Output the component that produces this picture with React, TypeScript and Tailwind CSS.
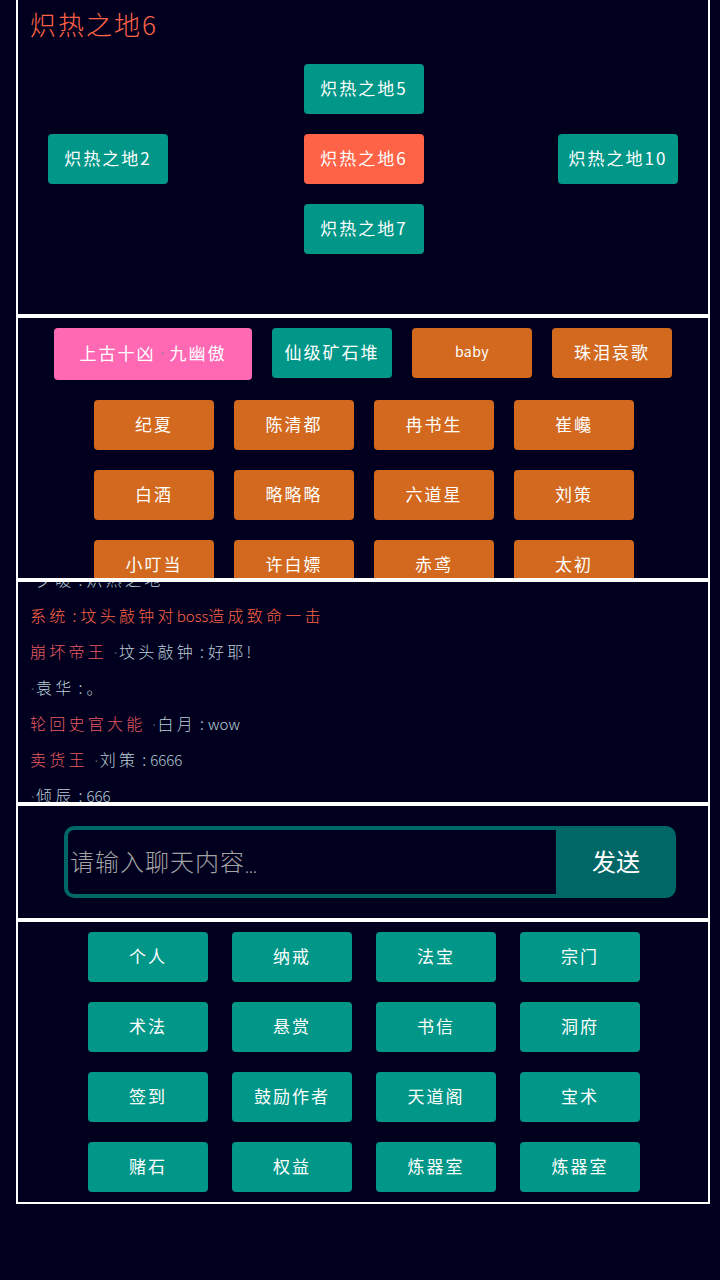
const FONT = "font-['Noto_Sans_CJK_SC','Noto_Sans',sans-serif]";

function Sep({ className = "" }: { className?: string }) {
  return <span className={`font-['Liberation_Sans'] tracking-[0px] text-[#6f8596] opacity-60 inline-block w-[6px] text-left ${className}`}>·</span>;
}

function Colon() {
  return <span className="inline-block w-[12px] text-center tracking-[0px]">:</span>;
}

function Btn({ label, color = "bg-[#009688]", w = "w-[120px]", h = "h-[50px]" }: { label: React.ReactNode; color?: string; w?: string; h?: string }) {
  return (
    <div className={`${w} ${h} ${color} shrink-0 rounded-[4px] flex items-center justify-center pb-[3px] text-[17px] tracking-[2px] text-white whitespace-nowrap`}>
      {label}
    </div>
  );
}

const players = [["纪夏", "陈清都", "冉书生", "崔巉"], ["白酒", "略略略", "六道星", "刘策"], ["小叮当", "许白嫖", "赤鸢", "太初"]];
const menu = [["个人", "纳戒", "法宝", "宗门"], ["术法", "悬赏", "书信", "洞府"], ["签到", "鼓励作者", "天道阁", "宝术"], ["赌石", "权益", "炼器室", "炼器室"]];
const ORANGE = "bg-[#d2691e]";
const LINE = "h-9 leading-[34px] whitespace-nowrap tracking-[3.25px] text-[16px] font-light";

function Latin({ children }: { children: React.ReactNode }) {
  return <span className="tracking-[0px] text-[15px]">{children}</span>;
}

function Line({ title, name, text }: { title?: string; name: string; text: React.ReactNode }) {
  return (
    <div className={LINE}>
      {title && <span className="text-[#e85a62] mr-[6px]">{title}</span>}
      <Sep />
      <span className="text-[#b9cdd6]">
        {name}
        <Colon />
        {text}
      </span>
    </div>
  );
}

export default function App() {
  return (
    <div className={`${FONT} min-h-[1280px] bg-[#00001e] pl-4 pr-[10px]`}>
      <section className="h-[316px] border-2 border-t-0 border-white overflow-hidden">
        <div className="pl-3 pt-[7px] h-[46px] text-[26px] leading-[34px] tracking-[2px] font-light text-[#ff6347]">炽热之地6</div>
        <div className="mt-[18px] pl-[30px] flex items-center">
          <Btn label="炽热之地2" />
          <div className="ml-[136px] flex flex-col gap-5">
            <Btn label="炽热之地5" />
            <Btn label="炽热之地6" color="bg-[#ff6347]" />
            <Btn label="炽热之地7" />
          </div>
          <div className="ml-[134px]">
            <Btn label="炽热之地10" />
          </div>
        </div>
      </section>

      <section className="h-[264px] border-2 border-white overflow-hidden pt-[10px]">
        <div className="flex flex-col gap-5">
          <div className="flex justify-center items-start gap-5">
            <Btn label={<>上古十凶<Sep className="mx-[4px]" />九幽傲</>} color="bg-[#ff69b4]" w="w-[198px]" h="h-[52px]" />
            <Btn label="仙级矿石堆" />
            <Btn label={<span className="text-[14px] tracking-[0.5px]">baby</span>} color={ORANGE} />
            <Btn label="珠泪哀歌" color={ORANGE} />
          </div>
          {players.map((row, i) => (
            <div key={i} className="flex justify-center gap-5 pl-[2px]">
              {row.map((n) => (
                <Btn key={n} label={n} color={ORANGE} />
              ))}
            </div>
          ))}
        </div>
      </section>

      <section className="h-[224px] border-2 border-white overflow-hidden pl-3">
        <div className="-mt-[20px]">
          <Line name="夕暖" text="炽热之地" />
          <div className={`${LINE} text-[#ff6347]`}>系统<Colon />坟头敲钟对<Latin>boss</Latin>造成致命一击</div>
          <Line title="崩坏帝王" name="坟头敲钟" text="好耶!" />
          <Line name="袁华" text="。" />
          <Line title="轮回史官大能" name="白月" text={<Latin>wow</Latin>} />
          <Line title="卖货王" name="刘策" text={<Latin>6666</Latin>} />
          <Line name="倾辰" text={<Latin>666</Latin>} />
        </div>
      </section>

      <section className="h-[116px] border-2 border-white flex items-center justify-center pl-[14px]">
        <div className="w-[612px] h-[72px] rounded-[10px] bg-[#006666] p-1 pr-0 flex">
          <div className="w-[488px] h-[64px] bg-[#00001e] rounded-l-[6px] flex items-center pl-[2px] pb-[2px] text-[24px] tracking-[1px] font-light text-[#a3a3a3]">
            请输入聊天内容<span className="text-[16px] tracking-[0px] self-end pb-[14px]">...</span>
          </div>
          <div className="flex-1 flex items-center justify-center pb-[2px] text-[24px] tracking-[0px] text-white">发送</div>
        </div>
      </section>

      <section className="h-[284px] border-2 border-white pt-[10px]">
        <div className="flex flex-col gap-5">
          {menu.map((row, i) => (
            <div key={i} className="flex justify-center gap-6 pl-[2px]">
              {row.map((n, j) => (
                <Btn key={j} label={n} />
              ))}
            </div>
          ))}
        </div>
      </section>
    </div>
  );
}
